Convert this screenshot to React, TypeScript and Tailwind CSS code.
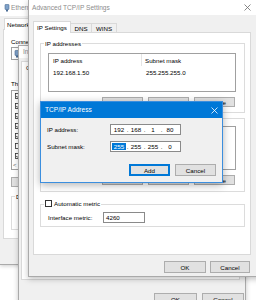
import React from "react";

const body = "text-[6.2px] leading-[7px] text-black whitespace-nowrap";

function CloseX({ color }: { color: string }) {
  return (
    <svg width="7" height="7" viewBox="0 0 7 7">
      <path d="M0.5 0.5L6.5 6.5M6.5 0.5L0.5 6.5" stroke={color} strokeWidth="0.8" fill="none" />
    </svg>
  );
}

function Btn({ label, w, def }: { label: string; w: string; def?: boolean }) {
  return (
    <div
      className={`flex h-full items-center justify-center border bg-[#e1e1e1] ${body} ${w} ${
        def ? "border-[#0078d7] shadow-[inset_0_0_0_1px_#0078d7]" : "border-[#adadad]"
      }`}
    >
      {label}
    </div>
  );
}

function Check({ on }: { on: boolean }) {
  return (
    <svg width="6" height="6" viewBox="0 0 6 6" className="shrink-0">
      <rect x="0.5" y="0.5" width="5" height="5" fill="#fff" stroke="#333" strokeWidth="0.8" />
      {on && <path d="M1.3 3.1L2.5 4.3L4.8 1.6" stroke="#111" strokeWidth="0.8" fill="none" />}
    </svg>
  );
}

function AdapterIcon() {
  return (
    <svg width="6" height="8" viewBox="0 0 6 8" className="shrink-0">
      <rect x="1" y="0.5" width="4" height="5" rx="0.5" fill="#7fa2c9" stroke="#4a6d96" strokeWidth="0.6" />
      <rect x="2" y="5.5" width="2" height="2" fill="#4a6d96" />
    </svg>
  );
}

function Group({
  label,
  className,
  children,
}: {
  label: React.ReactNode;
  className: string;
  children?: React.ReactNode;
}) {
  return (
    <div className={`relative border border-[#dcdcdc] ${className}`}>
      <div className={`absolute -top-[4px] left-[3px] flex items-center bg-white px-[1px] ${body}`}>{label}</div>
      {children}
    </div>
  );
}

function IpField({ parts, selectFirst }: { parts: string[]; selectFirst?: boolean }) {
  return (
    <div className={`flex h-[11px] w-[71px] items-center border border-[#8a8a8a] bg-white pl-[1px] ${body}`}>
      {parts.map((p, i) => (
        <React.Fragment key={i}>
          {i > 0 && <span className="w-[3px] text-center">.</span>}
          <span
            className={`w-[14px] text-center ${i === 0 && selectFirst ? "bg-[#0078d7] text-white" : ""}`}
          >
            {p}
          </span>
        </React.Fragment>
      ))}
    </div>
  );
}

export default function App() {
  return (
    <div className="relative h-[300px] w-[256px] overflow-hidden bg-white font-['Liberation_Sans',Arial,sans-serif]">
      {/* Ethernet Properties (back) */}
      <div className="absolute left-0 top-0 z-0 flex h-[265px] w-[160px] flex-col border-b border-r border-[#aaaaaa] bg-[#f0f0f0] shadow-[0_1px_4px_rgba(0,0,0,0.2)]">
        <div className="flex h-[16px] items-center bg-white pl-[4px]">
          <AdapterIcon />
          <span className="ml-[1px] text-[6.6px] text-[#8c8c8c] whitespace-nowrap">Ethernet Properties</span>
        </div>
        <div className="flex flex-col pl-[3px] pt-[2px]">
          <div className={`-mb-px relative z-10 ml-[1px] flex h-[12px] w-[40px] items-center border border-b-0 border-[#d9d9d9] bg-white pl-[2px] ${body}`}>
            Networking
          </div>
          <div className="flex h-[210px] w-[150px] flex-col border border-[#d9d9d9] bg-white pl-[7px]">
            <div className={`mt-[8px] ${body}`}>Connect using:</div>
            <div className="mt-[2px] flex h-[13px] w-[129px] items-center border border-[#a0a0a0] bg-white pl-[2px]">
              <AdapterIcon />
            </div>
            <div className={`mt-[20px] ${body}`}>This connection uses the following items:</div>
            <div className="mt-[3px] flex h-[80px] w-[129px] flex-col border border-[#a0a0a0] bg-white">
              {[true, true, true, true, true, false, true].map((on, i) => (
                <div key={i} className="flex h-[10px] items-center pl-[3px]">
                  <Check on={on} />
                </div>
              ))}
              <div className="flex h-[8px] items-center pl-[1px] text-[6px] text-[#606060]">&lt;</div>
            </div>
            <div className="mt-[7px] h-[10px]">
              <Btn label="Install..." w="w-[40px]" />
            </div>
            <Group label="Description" className="mt-[9px] h-[34px] w-[129px]" />
          </div>
        </div>
      </div>

      {/* IPv4 Properties (middle) */}
      <div className="absolute left-[18px] top-[45px] z-10 flex h-[270px] w-[228px] flex-col border border-[#aaaaaa] bg-[#f0f0f0] shadow-[0_1px_5px_rgba(0,0,0,0.22)]">
        <div className="flex h-[12px] items-center bg-white pl-[4px]">
          <span className="text-[6.6px] text-[#8c8c8c] whitespace-nowrap">
            Internet Protocol Version 4 (TCP/IPv4) Properties
          </span>
        </div>
        <div className="flex flex-col pl-[2px] pt-[3px]">
          <div className={`-mb-px relative z-10 flex h-[12px] w-[32px] items-center justify-center border border-b-0 border-[#d9d9d9] bg-white ${body}`}>
            General
          </div>
          <div className="h-[208px] w-[219px] border border-[#d9d9d9] bg-white" />
          <div className="mt-[13px] flex h-[12px] w-[223px] justify-end gap-[5px]">
            <Btn label="OK" w="w-[43px]" />
            <Btn label="Cancel" w="w-[42px]" />
          </div>
        </div>
      </div>

      {/* Advanced TCP/IP Settings */}
      <div className="absolute left-[28px] top-0 z-20 flex h-[277px] w-[234px] flex-col border border-t-0 border-[#aaaaaa] bg-[#f0f0f0] shadow-[0_2px_6px_rgba(0,0,0,0.25)]">
        <div className="flex h-[15px] items-center bg-white pl-[3px]">
          <span className="text-[6.6px] text-[#8c8c8c] whitespace-nowrap">Advanced TCP/IP Settings</span>
          <div className="ml-auto flex h-full w-[28px] items-center justify-center">
            <CloseX color="#6b6b6b" />
          </div>
        </div>
        <div className="flex flex-col px-[4px] pt-[6px]">
          <div className="flex h-[11px] items-end">
            <div className={`-mb-px relative z-10 flex h-[12px] w-[38px] items-center justify-center border border-b-0 border-[#d9d9d9] bg-white ${body}`}>
              IP Settings
            </div>
            <div className={`flex h-[9px] w-[21px] items-center justify-center border border-b-0 border-l-0 border-[#d9d9d9] bg-[#f0f0f0] ${body}`}>
              DNS
            </div>
            <div className={`flex h-[9px] w-[25px] items-center justify-center border border-b-0 border-l-0 border-[#d9d9d9] bg-[#f0f0f0] ${body}`}>
              WINS
            </div>
          </div>
          <div className="flex h-[223px] w-[218px] flex-col border border-[#d9d9d9] bg-white pl-[6px] pr-[5px] pt-[10px]">
            <Group label="IP addresses" className="pb-[5px] pl-[7px] pr-[8px] pt-[9px]">
              <div className="flex h-[39px] flex-col border border-[#a0a0a0] bg-white">
                <div className={`flex h-[12px] items-center ${body}`}>
                  <div className="flex h-full w-[93px] items-center border-r border-[#e5e5e5] pl-[4px]">IP address</div>
                  <div className="pl-[3px]">Subnet mask</div>
                </div>
                <div className={`flex h-[12px] items-center ${body}`}>
                  <div className="w-[93px] pl-[4px]">192.168.1.50</div>
                  <div className="pl-[4px]">255.255.255.0</div>
                </div>
              </div>
              <div className="ml-[54px] mt-[5px] flex h-[10px] gap-[5px]">
                <Btn label="Add..." w="w-[41px]" />
                <Btn label="Edit..." w="w-[41px]" />
                <Btn label="Remove" w="w-[41px]" />
              </div>
            </Group>
            <Group label="Default gateways:" className="mt-[5px] pb-[6px] pl-[7px] pr-[8px] pt-[7px]">
              <div className="h-[44px] border border-[#a0a0a0] bg-white" />
              <div className="ml-[54px] mt-[5px] flex h-[10px] gap-[5px]">
                <Btn label="Add..." w="w-[41px]" />
                <Btn label="Edit..." w="w-[41px]" />
                <Btn label="Remove" w="w-[41px]" />
              </div>
            </Group>
            <Group
              label={
                <span className="-mt-[1px] flex items-center gap-[2px]">
                  <span className="h-[7px] w-[7px] border border-[#333] bg-white" />
                  Automatic metric
                </span>
              }
              className="mt-[12px] pb-[3px] pl-[7px] pt-[7px]"
            >
              <div className="flex h-[11px] items-center">
                <span className={`w-[55px] ${body}`}>Interface metric:</span>
                <div className={`flex h-[11px] w-[42px] items-center border border-[#8a8a8a] bg-white pl-[2px] ${body}`}>
                  4260
                </div>
              </div>
            </Group>
          </div>
          <div className="mt-[6px] flex h-[12px] w-[218px] justify-end gap-[4px] pr-[1px]">
            <Btn label="OK" w="w-[42px]" />
            <Btn label="Cancel" w="w-[40px]" />
          </div>
        </div>
      </div>

      {/* TCP/IP Address dialog (active) */}
      <div className="absolute left-[40px] top-[101px] z-30 flex h-[82px] w-[183px] flex-col border border-[#3b8ede] bg-[#f0f0f0] shadow-[0_2px_8px_rgba(0,0,0,0.3)]">
        <div className="flex h-[16px] items-center bg-[#0078d7] pl-[4px]">
          <span className="text-[6.6px] text-white whitespace-nowrap">TCP/IP Address</span>
          <div className="ml-auto flex h-full w-[16px] items-center justify-center">
            <CloseX color="#ffffff" />
          </div>
        </div>
        <div className="flex flex-col">
          <div className="mt-[6px] flex h-[11px] items-center">
            <span className={`w-[69px] pl-[6px] ${body}`}>IP address:</span>
            <IpField parts={["192", "168", "1", "80"]} />
          </div>
          <div className="mt-[6px] flex h-[11px] items-center">
            <span className={`w-[69px] pl-[6px] ${body}`}>Subnet mask:</span>
            <IpField parts={["255", "255", "255", "0"]} selectFirst />
          </div>
          <div className="ml-[88px] mt-[12px] flex h-[12px] gap-[5px]">
            <Btn label="Add" w="w-[41px]" def />
            <Btn label="Cancel" w="w-[41px]" />
          </div>
        </div>
      </div>
    </div>
  );
}
